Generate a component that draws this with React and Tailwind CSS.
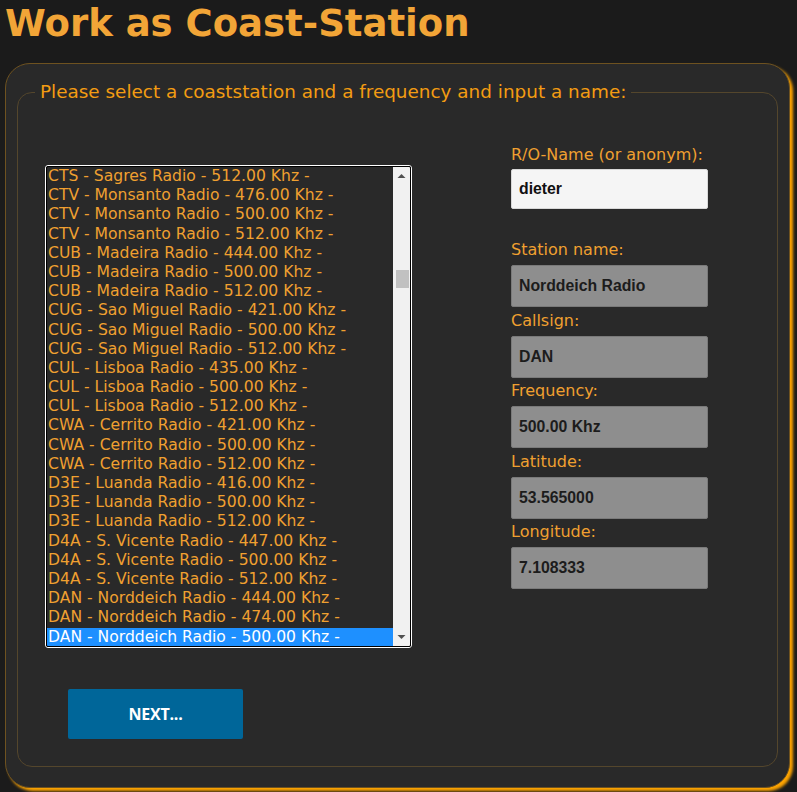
import React from 'react'

const stations = [
  'CTS - Sagres Radio - 512.00 Khz -',
  'CTV - Monsanto Radio - 476.00 Khz -',
  'CTV - Monsanto Radio - 500.00 Khz -',
  'CTV - Monsanto Radio - 512.00 Khz -',
  'CUB - Madeira Radio - 444.00 Khz -',
  'CUB - Madeira Radio - 500.00 Khz -',
  'CUB - Madeira Radio - 512.00 Khz -',
  'CUG - Sao Miguel Radio - 421.00 Khz -',
  'CUG - Sao Miguel Radio - 500.00 Khz -',
  'CUG - Sao Miguel Radio - 512.00 Khz -',
  'CUL - Lisboa Radio - 435.00 Khz -',
  'CUL - Lisboa Radio - 500.00 Khz -',
  'CUL - Lisboa Radio - 512.00 Khz -',
  'CWA - Cerrito Radio - 421.00 Khz -',
  'CWA - Cerrito Radio - 500.00 Khz -',
  'CWA - Cerrito Radio - 512.00 Khz -',
  'D3E - Luanda Radio - 416.00 Khz -',
  'D3E - Luanda Radio - 500.00 Khz -',
  'D3E - Luanda Radio - 512.00 Khz -',
  'D4A - S. Vicente Radio - 447.00 Khz -',
  'D4A - S. Vicente Radio - 500.00 Khz -',
  'D4A - S. Vicente Radio - 512.00 Khz -',
  'DAN - Norddeich Radio - 444.00 Khz -',
  'DAN - Norddeich Radio - 474.00 Khz -',
  'DAN - Norddeich Radio - 500.00 Khz -',
]

const fields = [
  { label: 'Station name:', value: 'Norddeich Radio' },
  { label: 'Callsign:', value: 'DAN' },
  { label: 'Frequency:', value: '500.00 Khz' },
  { label: 'Latitude:', value: '53.565000' },
  { label: 'Longitude:', value: '7.108333' },
]

function StationList({ selected }) {
  return (
    <div className="w-[367px] h-[483px] rounded-[3px] border border-white">
      <div className="flex h-full rounded-[2px] border border-black bg-[#292929] overflow-hidden">
        <div className="flex-1 overflow-hidden">
          {stations.map((s, i) => (
            <div
              key={s + i}
              className={`pl-[1px] h-[19.2px] leading-[19.2px] text-[15.6px] whitespace-nowrap ${
                i === selected ? 'bg-[#1e90ff] text-white' : 'text-[#f0a030]'
              }`}
            >
              {s}
            </div>
          ))}
        </div>
        {/* scrollbar */}
        <div className="w-[17px] bg-[#f1f1f1] flex flex-col items-center">
          <svg width="9" height="6" viewBox="0 0 9 6" className="mt-[6px]">
            <path d="M0.5 5 L4.5 1 L8.5 5 Z" fill="#505050" />
          </svg>
          <div className="mt-[91px] w-[13px] h-[18px] bg-[#c1c1c1] ml-[1px]" />
          <div className="flex-1" />
          <svg width="9" height="6" viewBox="0 0 9 6" className="mb-[6px]">
            <path d="M0.5 1 L4.5 5 L8.5 1 Z" fill="#505050" />
          </svg>
        </div>
      </div>
    </div>
  )
}

export default function App() {
  return (
    <div className="min-h-[792px] bg-[#1b1b1b] overflow-hidden" style={{ fontFamily: '"DejaVu Sans", sans-serif' }}>
      <h1 className="pl-[5px] pt-[2px] text-[37px] leading-[43px] font-bold text-[#f2a537]">
        Work as Coast-Station
      </h1>

      <div className="ml-[5px] mt-[18px] w-[785px] rounded-[25px] border border-[#6e5220] bg-[#292929] shadow-[3px_3px_3px_#ffa500] px-[11px] pt-[17px] pb-[20px]">
        <fieldset className="rounded-[15px] border border-[#54462c] pl-[17px] pr-[17px] pb-[27px]">
          <legend className="px-[5px] text-[18.4px] leading-[22px] text-[#f39c12]">
            Please select a coaststation and a frequency and input a name:
          </legend>

          <div className="pl-[10px] pt-[42px]">
            <div className="flex items-start">
              <div className="mt-[20px]">
                <StationList selected={24} />
              </div>

              <div className="ml-[99px] w-[197px] flex flex-col">
                <label className="text-[16px] leading-[20px] text-[#f0a030]">R/O-Name (or anonym):</label>
                <div className="mt-[4px] h-[40px] rounded-[2px] border border-[#d8d8d8] bg-[#f5f5f5] flex items-center pl-[7px] text-[15.8px] font-bold text-[#111]" style={{ fontFamily: '"Liberation Sans", Arial, sans-serif' }}>
                  dieter
                </div>

                <div className="mt-[31px] flex flex-col gap-[3.5px]">
                  {fields.map((f) => (
                    <div key={f.label} className="flex flex-col">
                      <label className="text-[16px] leading-[20px] text-[#f0a030]">{f.label}</label>
                      <div className="mt-[5px] h-[42px] rounded-[2px] border border-[#7a7a7a] bg-[#8e8e8e] flex items-center pl-[7px] text-[15.8px] font-bold text-[#1c1c1c]" style={{ fontFamily: '"Liberation Sans", Arial, sans-serif' }}>
                        {f.value}
                      </div>
                    </div>
                  ))}
                </div>
              </div>
            </div>

            <button className="mt-[41px] ml-[23px] w-[175px] h-[50px] rounded-[2px] bg-[#006699] text-white text-[16px] font-bold tracking-[-0.2px]" style={{ fontFamily: '"Open Sans", sans-serif' }}>
              NEXT...
            </button>
          </div>
        </fieldset>
      </div>
    </div>
  )
}
